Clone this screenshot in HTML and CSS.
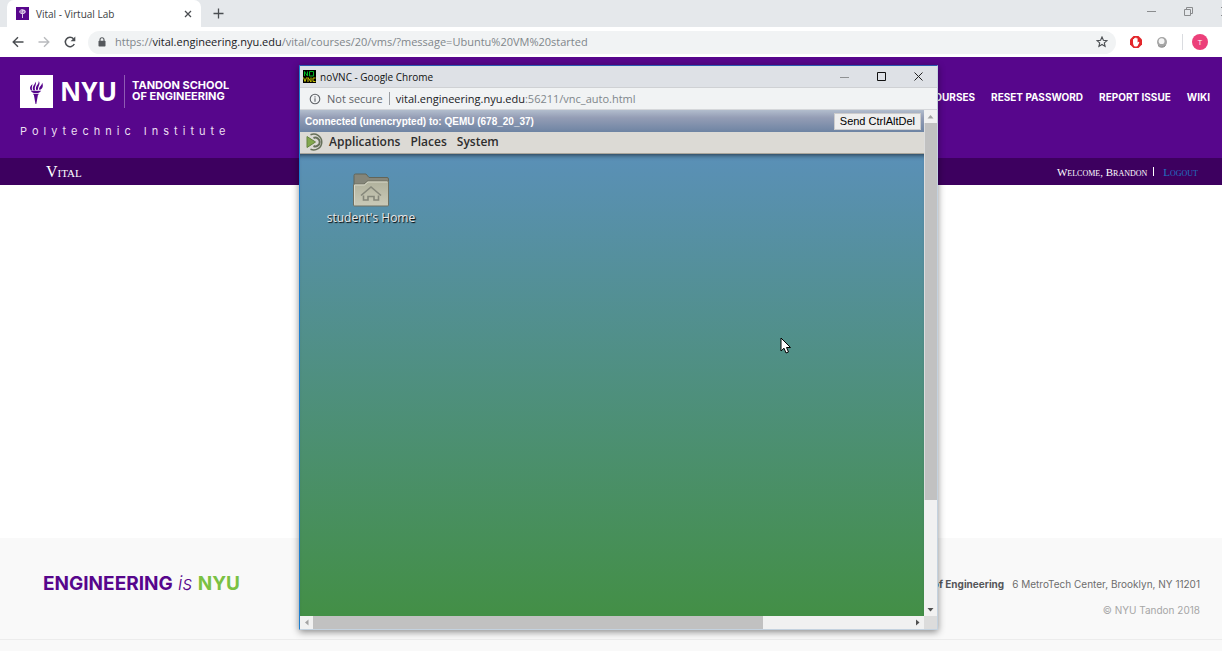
FILE: index.html
```html
<!DOCTYPE html>
<html lang="en">
<head>
<meta charset="utf-8">
<title>Vital - Virtual Lab</title>
<link rel="stylesheet" href="styles.css">
</head>
<body>
<div class="tabstrip">
  <div class="tab">
    <svg class="tab-icon" viewBox="0 0 13 13"><rect width="13" height="13" fill="#57068c"/><path d="M4 3l2-1 3 1 1 2-2 2H5L3 5zM6 7h1v4H6z" fill="#d9c6e6"/><path d="M5 3v3M8 4L7 6" stroke="#57068c" stroke-width=".6"/></svg>
    <span class="tab-title">Vital - Virtual Lab</span>
    <button class="icon-button" aria-label="Close tab"><svg width="8" height="8" viewBox="0 0 8 8"><path d="M1 1l6 6M7 1L1 7" stroke="#4a4d51" stroke-width="1.3"/></svg></button>
  </div>
  <button class="icon-button new-tab" aria-label="New tab"><svg width="11" height="11" viewBox="0 0 11 11"><path d="M5.500 .5v10M.5 5.500h10" stroke="#4a4d51" stroke-width="1.300"/></svg></button>
  <div class="window-controls">
    <button class="icon-button" aria-label="Minimize"><svg width="9" height="9" viewBox="0 0 9 9"><path d="M0 4.500h9" stroke="#8a8c8e"/></svg></button>
    <button class="icon-button" aria-label="Restore"><svg width="9" height="9" viewBox="0 0 9 9"><path d="M.5 2.500h6v6h-6zM2.500 2V.500h6v6H7" fill="none" stroke="#8a8c8e"/></svg></button>
    <button class="icon-button" aria-label="Close"><svg width="9" height="9" viewBox="0 0 9 9"><path d="M0 0l9 9M9 0L0 9" stroke="#8a8c8e"/></svg></button>
  </div>
</div>
<div class="toolbar">
  <button class="icon-button" aria-label="Back"><svg width="12" height="12" viewBox="0 0 12 12"><path d="M11.500 6H1.500M6 1.200L1.200 6 6 10.800" fill="none" stroke="#4a4d51" stroke-width="1.400"/></svg></button>
  <button class="icon-button" aria-label="Forward"><svg width="12" height="12" viewBox="0 0 12 12"><path d="M.5 6h10M6 1.200L10.800 6 6 10.800" fill="none" stroke="#b9bbbe" stroke-width="1.400"/></svg></button>
  <button class="icon-button" aria-label="Reload"><svg width="12" height="12" viewBox="0 0 12 12"><path d="M10.300 8A4.700 4.700 0 1 1 9.500 2.800" fill="none" stroke="#4a4d51" stroke-width="1.500"/><path d="M11.300.500v4.700H6.600z" fill="#4a4d51"/></svg></button>
  <div class="address">
    <svg width="8" height="10" viewBox="0 0 8 10"><path d="M2 4V2.700a2 2 0 0 1 4 0V4" fill="none" stroke="#55585c" stroke-width="1.100"/><rect x=".5" y="3.700" width="7" height="5.800" rx=".7" fill="#55585c"/></svg>
    <span class="url"><span class="faint">https://</span>vital.engineering.nyu.edu<span class="faint">/vital/courses/20/vms/?message=Ubuntu%20VM%20started</span></span>
    <button class="icon-button star" aria-label="Bookmark"><svg width="12" height="12" viewBox="0 0 12 12"><path d="M6 1l1.400 3.300 3.600.3-2.700 2.300.8 3.500L6 8.500l-3.100 1.900.8-3.500L1 4.600l3.600-.3z" fill="none" stroke="#4a4d51" stroke-width="1.100"/></svg></button>
  </div>
  <div class="extensions">
    <button class="icon-button" aria-label="Ad blocker"><svg width="12" height="12" viewBox="0 0 12 12"><path d="M3.500 0h5L12 3.500v5L8.500 12h-5L0 8.500v-5z" fill="#e3262b"/><path d="M3 6V3.300q.6-.6 1.100 0V2.200q.6-.6 1.200 0v-.5q.7-.6 1.200 0v.8q.6-.5 1.100 0V6.500l1-.8q.8 0 .7.700L7.600 10q-2 1-3.600 0Q2.800 8.500 3 6z" fill="#fff"/></svg></button>
    <button class="icon-button" aria-label="Extension"><svg width="12" height="12" viewBox="0 0 12 12"><circle cx="6" cy="6" r="5" fill="#a5a5a5"/><path d="M2 9.500A5 5 0 0 0 9.500 9.500" stroke="#777" fill="none"/><circle cx="5.600" cy="5.200" r="2.900" fill="#f4f4f4"/></svg></button>
    <div class="profile"><button class="avatar">T</button></div>
  </div>
</div>
<header class="site-header">
  <div class="brand">
    <div class="logo">
      <svg class="torch" viewBox="0 0 33 33"><rect width="33" height="33" fill="#fff"/><path d="M10.800 15.200C9 12.500 10.800 10.700 12.400 9c0 2-1.200 3.700-.2 6.200zM13.300 15.200c-1.600-4 1.500-5 2.200-8.500 1.600 3-1.700 5-.4 8.500zM16.200 15c-1.200-4.200 2.600-5.200 2.600-9 2.100 3.200-1.100 5.300-.8 8.800zM19.100 14.800c-.3-3 2.600-4 3.100-7 1.500 3.400.2 6-2 7zM10.800 15.800h10.400q-1.300 1.900-3.100 2.100h-4.200q-2.200-.2-3.100-2.100z" fill="#57068c"/><path d="M13 18.800h5.800v.8H18L16.300 29h-.8L13.800 19.600H13z" fill="#57068c"/></svg>
      <span class="nyu">NYU</span>
      <span class="school"><span>TANDON SCHOOL</span><span>OF ENGINEERING</span></span>
    </div>
    <div class="institute">Polytechnic Institute</div>
  </div>
  <nav class="site-nav">
    <a href="#">COURSES</a><a href="#">RESET PASSWORD</a><a href="#">REPORT ISSUE</a><a href="#">WIKI</a>
  </nav>
</header>
<div class="subbar">
  <a class="vital" href="#">Vital</a>
  <div class="account"><span>Welcome, Brandon</span><span class="bar"></span><a href="#">Logout</a></div>
</div>
<main class="content"></main>
<footer class="site-footer">
  <div class="slogan"><b>ENGINEERING</b> <i>is</i> <b class="green">NYU</b></div>
  <div class="contact">
    <div class="place"><b>NYU Tandon School of Engineering</b><span>6 MetroTech Center, Brooklyn, NY 11201</span></div>
    <div class="copyright">© NYU Tandon 2018</div>
  </div>
</footer>
<div class="footer-end"></div>

<section class="popup">
  <div class="popup-title">
    <svg width="13" height="13" viewBox="0 0 13 13"><rect width="13" height="13" fill="#000"/><path d="M1.500 6V1.500L4.500 6V1.500M6.500 1.500h4V6h-4z" fill="none" stroke="#00b526"/><path d="M.5 7.500L2 11.500l1.500-4M5 12V7.500L8 12V7.500M12.500 8H10v3.500h2.500" fill="none" stroke="#c9c400"/></svg>
    <span>noVNC - Google Chrome</span>
    <div class="popup-controls">
      <button class="icon-button" aria-label="Minimize window"><svg width="9" height="9" viewBox="0 0 9 9"><path d="M0 5.500h9" stroke="#8f9193"/></svg></button>
      <button class="icon-button" aria-label="Maximize window"><svg width="9" height="9" viewBox="0 0 9 9"><path d="M.5.500h8v8h-8z" fill="none" stroke="#111"/></svg></button>
      <button class="icon-button" aria-label="Close window"><svg width="9" height="9" viewBox="0 0 9 9"><path d="M.5.500l8 8M8.500.500l-8 8" stroke="#222"/></svg></button>
    </div>
  </div>
  <div class="popup-url">
    <svg width="12" height="12" viewBox="0 0 12 12"><circle cx="6" cy="6" r="4.800" fill="none" stroke="#5f6368" stroke-width="1.100"/><path d="M6 5.300v3.400M6 3.200v1.200" stroke="#5f6368" stroke-width="1.100"/></svg>
    <span class="not-secure">Not secure</span>
    <span>vital.engineering.nyu.edu<span class="faint">:56211/vnc_auto.html</span></span>
  </div>
  <div class="view">
    <div class="screen">
      <div class="status"><span>Connected (unencrypted) to: QEMU (678_20_37)</span><button class="send">Send CtrlAltDel</button></div>
      <div class="panel">
        <svg width="19" height="18" viewBox="0 0 19 18"><path d="M4.500 1.700A8 8 0 1 1 4.500 16.300" fill="none" stroke="#66705a" stroke-width="1.500"/><path d="M7.500 5A4.400 4.400 0 1 1 7.500 13" fill="none" stroke="#66705a" stroke-width="2"/><path d="M1 3.500L9.500 9 1 14.500z" fill="#83a84e" stroke="#66833f"/></svg>
        <button>Applications</button><button>Places</button><button>System</button>
      </div>
      <div class="desktop">
        <div class="shortcut">
          <svg width="38" height="34" viewBox="0 0 38 34"><defs><linearGradient id="folder" x1="0" y1="0" x2="0" y2="1"><stop offset="0" stop-color="#b0b19c"/><stop offset="1" stop-color="#cacab8"/></linearGradient></defs><path d="M2 32V2.500Q2 1 3.500 1H14l3 3.500h18q1.500 0 1.500 1.500v26z" fill="#85867a" stroke="#636558"/><path d="M1.500 32V12q0-1 1.500-1h9l3.500-3H35q1.500 0 1.500 1v23q0 1-1 1h-33q-1 0-1-1z" fill="url(#folder)" stroke="#6e7062"/><path d="M2.500 31.500V12h10l3.500-3h19.500" fill="none" stroke="#d7d7c8"/><path d="M9 22.500l10-8.500 10 8.500M11.500 22.500V27h4.500v-3.500h6V27h4.500v-4.500" fill="none" stroke="#85877a" stroke-width="1.600"/></svg>
          <span>student's Home</span>
        </div>
        <svg class="cursor" viewBox="0 0 11 17"><path d="M1 1v13l3-2.800L6 16l2.500-1-2-4.500h4z" fill="#fff" stroke="#000"/></svg>
      </div>
    </div>
    <div class="vscroll"><svg viewBox="0 0 13 13"><path d="M3.500 8.500l3-3.500 3 3.500z" fill="#a3a3a3"/></svg><div class="vthumb"></div><svg viewBox="0 0 13 13"><path d="M3.500 5l3 3.500 3-3.500z" fill="#505050"/></svg></div>
    <div class="hscroll"><svg viewBox="0 0 13 13"><path d="M8.500 3.500L5 6.500l3.500 3z" fill="#a3a3a3"/></svg><div class="hthumb"></div><svg viewBox="0 0 13 13"><path d="M5 3.500l3.500 3L5 9.500z" fill="#505050"/></svg></div>
    <div class="corner"></div>
  </div>
</section>
</body>
</html>
```
FILE: styles.css
```css
* { box-sizing: border-box; }
body { margin: 0; min-height: 100vh; display: flex; flex-direction: column; position: relative; overflow-x: hidden; background: #fff; font-family: "Open Sans", "Noto Sans", sans-serif; font-size: 11px; }
button { border: 0; padding: 0; background: none; font: inherit; color: inherit; }
a { color: inherit; text-decoration: none; }
svg { display: block; flex: none; }
.icon-button { display: flex; flex: none; }
.faint { color: #80868b; }

.tabstrip { display: flex; align-items: stretch; height: 27px; background: #e5e8eb; padding-left: 7px; overflow: hidden; }
.tab { display: flex; align-items: center; width: 194px; padding: 0 9px; gap: 7px; background: #fff; border-radius: 7px 7px 0 0; color: #3c4043; }
.tab-icon { width: 13px; height: 13px; }
.tab-title { flex: 1; font-size: 10px; }
.new-tab { align-items: center; margin-left: 12px; }
.window-controls { display: flex; align-items: center; gap: 28px; margin: 0 -8px 4px auto; }

.toolbar { display: flex; align-items: center; gap: 14px; height: 30px; padding: 0 14px 0 12px; background: #fff; }
.address { flex: 1; display: flex; align-items: center; height: 23px; margin-left: -2px; padding: 0 8px 0 10px; gap: 9px; border-radius: 12px; background: #f1f3f4; color: #202124; }
.url { flex: 1; padding-bottom: 2px; }
.extensions { display: flex; align-items: center; gap: 14px; }
.profile { padding-left: 9px; border-left: 1px solid #dadce0; }
.avatar { display: block; width: 16px; height: 16px; border-radius: 50%; background: #ec407a; color: #fff; font-size: 8px; line-height: 16px; text-align: center; }

.site-header { display: flex; justify-content: space-between; height: 101px; padding: 18px 12px 0 20px; background: #57068c; color: #fff; font-family: Inter, sans-serif; }
.logo { display: flex; align-items: center; height: 33px; }
.torch { width: 33px; height: 33px; }
.nyu { margin: 0 7px; font-family: "Noto Sans", sans-serif; font-size: 26px; font-weight: 700; line-height: 33px; }
.school { display: grid; padding: 5px 0 6px 7px; border-left: 1px solid #8f5bb3; font-size: 11px; line-height: 11px; font-weight: 700; }
.institute { margin-top: 15px; font-size: 11px; line-height: 16px; letter-spacing: 5px; color: #eadff1; }
.site-nav { display: flex; gap: 16px; padding-top: 14px; font-size: 10px; line-height: 16px; font-weight: 700; white-space: nowrap; }

.subbar { display: flex; align-items: center; justify-content: space-between; height: 27px; padding: 0 24px 0 46px; background: #3d005f; color: #fff; font-family: "Liberation Serif", serif; font-variant: small-caps; }
.vital { font-size: 16px; }
.account { display: flex; align-items: center; font-size: 11px; }
.bar { width: 1px; height: 9px; margin: 0 9px 0 6px; background: #fff; }
.account a { color: #1f72c2; }

.content { flex: 1; }
.site-footer { display: flex; justify-content: space-between; height: 102px; padding: 36px 22px 0 43px; border-bottom: 1px solid #ececec; background: #f9f9f9; font-family: Inter, sans-serif; }
.slogan { font-size: 19px; line-height: 20px; color: #57068c; }
.slogan i { font-weight: 300; }
.slogan .green { color: #7ac143; }
.contact { font-size: 10px; line-height: 20px; text-align: right; color: #6d6d6d; white-space: nowrap; }
.place { display: flex; gap: 8px; }
.place b { color: #55565a; }
.copyright { margin-top: 6px; color: #a6a6a6; }
.footer-end { height: 11px; background: #f9f9f9; }

.popup { position: absolute; left: 299px; top: 65px; width: 639px; height: 565px; display: flex; flex-direction: column; border: 1px solid #1d7fd0; border-top-color: #2b59b0; border-right-color: #c4d2df; border-bottom-color: #c4d2df; background: #fff; box-shadow: 0 2px 7px rgba(0, 0, 0, .45); }
.popup-title { display: flex; align-items: center; height: 22px; padding: 0 14px 0 3px; gap: 4px; border-bottom: 1px solid #cfd1d4; background: #dee1e6; color: #111; font-size: 10px; }
.popup-controls { display: flex; gap: 28px; margin-left: auto; }
.popup-url { display: flex; align-items: center; height: 22px; padding-left: 9px; gap: 6px; border-bottom: 1px solid #d5d7da; background: #f1f3f4; color: #202124; }
.not-secure { padding-right: 6px; border-right: 1px solid #9a9da1; line-height: 13px; color: #5f6368; }
.view { flex: 1; min-height: 0; display: grid; grid-template-columns: 1fr 13px; grid-template-rows: 1fr 13px; }
.screen { display: flex; flex-direction: column; min-width: 0; }
.status { display: flex; align-items: center; justify-content: space-between; height: 22px; padding: 0 3px 0 5px; background: linear-gradient(#b2bdcd, #949db5 35%, #6e84a3); color: #fff; font-family: "Liberation Sans", Arial, sans-serif; font-size: 10px; font-weight: 700; }
.send { height: 17px; padding: 0 5px; border: 1px solid #ccc; background: #eee; color: #000; font-size: 11px; font-weight: 400; }
.panel { display: flex; align-items: center; height: 22px; padding: 0 6px 2px; border-bottom: 1px solid #aaa69c; background: #dcdad5; color: #2e2e2e; font-size: 12px; font-weight: 600; }
.panel button { margin: 0 6px 0 4px; }
.desktop { position: relative; flex: 1; padding: 19px 0 0 16px; background: linear-gradient(#5a90b7, #438f46); box-shadow: inset 0 5px 5px -4px #234; }
.shortcut { display: flex; flex-direction: column; align-items: center; gap: 2px; width: 110px; color: #e8e8e8; font-size: 12px; line-height: 18px; text-shadow: 1px 1px 1px #000; }
.cursor { position: absolute; left: 480px; top: 183px; width: 11px; height: 17px; }
.vscroll { display: flex; flex-direction: column; background: #f1f1f1; }
.vscroll svg, .hscroll svg { width: 13px; height: 13px; }
.vthumb { height: 377px; margin-bottom: auto; border-left: 1px solid #ddd; background: #c1c1c1; }
.hscroll { display: flex; background: #f1f1f1; }
.hthumb { width: 450px; margin-right: auto; background: #c1c1c1; }
.corner { background: #dcdcdc; }
```
